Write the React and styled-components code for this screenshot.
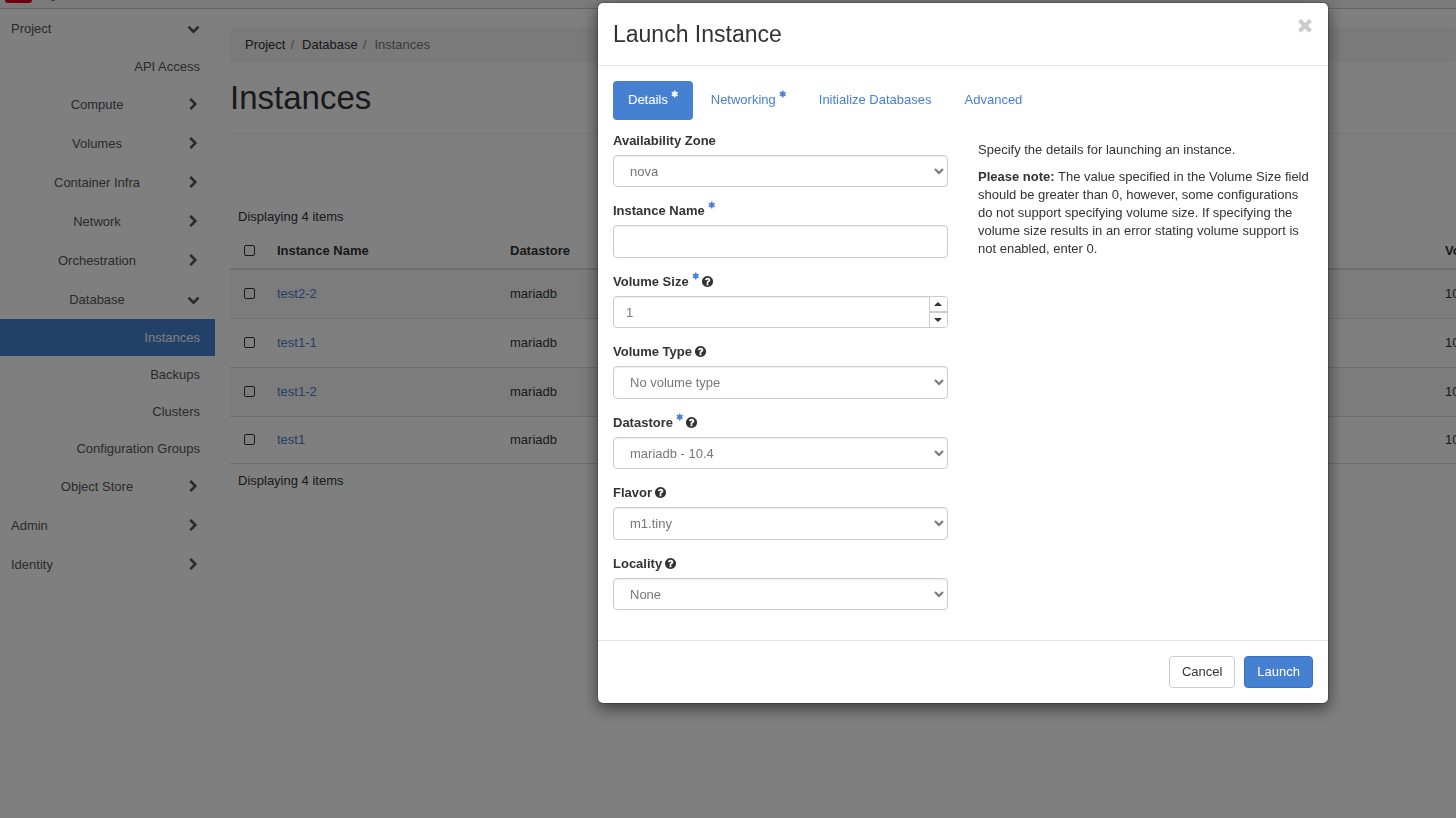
import React from "react";
import styled, { createGlobalStyle, css } from "styled-components";

const blue = "#4680d0";

const GlobalStyle = createGlobalStyle`
  *, *::before, *::after { box-sizing: border-box; }
  html, body { height: 100%; }
  body {
    margin: 0;
    background: #fff;
    color: #333;
    font-family: "Liberation Sans", Arial, sans-serif;
    font-size: 13px;
    line-height: 18px;
    overflow: hidden;
  }
  button, input, select { font: inherit; }
  a { color: ${blue}; text-decoration: none; }
`;

const paths = {
  right:
    "M1363 877l-742 742q-19 19-45 19t-45-19l-166-166q-19-19-19-45t19-45l531-531-531-531q-19-19-19-45t19-45l166-166q19-19 45-19t45 19l742 742q19 19 19 45t-19 45z",
  down:
    "M1683 808l-742 741q-19 19-45 19t-45-19l-742-741q-19-19-19-45.5t19-45.5l166-165q19-19 45-19t45 19l531 531 531-531q19-19 45-19t45 19l166 165q19 19 19 45.5t-19 45.5z",
  times:
    "M1490 1322q0 40-28 68l-136 136q-28 28-68 28t-68-28l-294-294-294 294q-28 28-68 28t-68-28l-136-136q-28-28-28-68t28-68l294-294-294-294q-28-28-28-68t28-68l136-136q28-28 68-28t68 28l294 294 294-294q28-28 68-28t68 28l136 136q28 28 28 68t-28 68l-294 294 294 294q28 28 28 68z",
  asterisk:
    "M1482 1050q46 26 59.5 77.5t-12.5 97.5l-64 110q-26 46-77.5 59.5t-97.5-12.5l-266-153v307q0 52-38 90t-90 38h-128q-52 0-90-38t-38-90v-307l-266 153q-46 26-97.5 12.5t-77.5-59.5l-64-110q-26-46-12.5-97.5t59.5-77.5l266-154-266-154q-46-26-59.5-77.5t12.5-97.5l64-110q26-46 77.5-59.5t97.5 12.5l266 153v-307q0-52 38-90t90-38h128q52 0 90 38t38 90v307l266-153q46-26 97.5-12.5t77.5 59.5l64 110q26 46 12.5 97.5t-59.5 77.5l-266 154z",
  question:
    "M1024 1376v-192q0-14-9-23t-23-9h-192q-14 0-23 9t-9 23v192q0 14 9 23t23 9h192q14 0 23-9t9-23zm256-672q0-88-55.5-163t-138.5-116-170-41q-243 0-371 213-15 24 8 42l132 100q7 6 19 6 16 0 25-12 53-68 86-92 34-24 86-24 48 0 85.5 26t37.5 59q0 38-20 61t-68 45q-63 28-115.5 86.5t-52.5 125.5v36q0 14 9 23t23 9h192q14 0 23-9t9-23q0-19 21.5-49.5t54.5-49.5q32-18 49-28.5t46-35 44.5-48 28-60.5 12.5-81zm384 192q0 209-103 385.5t-279.5 279.5-385.5 103-385.5-103-279.5-279.5-103-385.5 103-385.5 279.5-279.5 385.5-103 385.5 103 279.5 279.5 103 385.5z",
};

const Icon = ({ name, size = 13, className }) => (
  <svg
    className={className}
    width={size}
    height={size}
    viewBox="0 0 1792 1792"
    fill="currentColor"
    aria-hidden="true"
  >
    <path d={paths[name]} />
  </svg>
);

/* Page */

const TopBar = styled.header`
  display: flex;
  align-items: flex-end;
  height: 9px;
  padding: 0 5px 5px;
  overflow: hidden;
  background: #f5f5f5;
  border-bottom: 1px solid #ccc;
`;

const Logo = styled.svg`
  display: block;
  flex: none;
`;

const Columns = styled.div`
  display: flex;
  align-items: flex-start;
`;

const Sidebar = styled.nav`
  flex: none;
  width: 215px;
`;

const NavToggle = styled.button`
  display: flex;
  align-items: center;
  width: 100%;
  height: 39px;
  padding: 0 11px;
  border: 0;
  background: none;
  color: #555;
  cursor: pointer;
`;

const NavLabel = styled.span`
  flex: 1;
  text-align: ${(p) => (p.$nested ? "center" : "left")};
`;

const NavArrow = styled.span`
  display: flex;
  justify-content: center;
  width: 21px;
`;

const NavLink = styled.a`
  display: block;
  padding: 10px 15px 9px;
  text-align: right;
  color: ${(p) => (p.$active ? "#fff" : "#555")};
  background: ${(p) => (p.$active ? blue : "none")};
`;

const Main = styled.main`
  flex: 1;
  min-width: 0;
  padding: 18px 0 0 15px;
  overflow: hidden;
`;

const Breadcrumb = styled.ol`
  display: flex;
  margin: 0;
  padding: 9px 15px 8px;
  list-style: none;
  background: #f5f5f5;
  border-radius: 4px;
`;

const Crumb = styled.li`
  color: #777;

  & > a { color: #333; }

  & + &::before {
    content: "/";
    padding: 0 8px 0 5px;
    color: #888;
  }
`;

const PageTitle = styled.h1`
  margin: 18px 0 74px;
  padding-bottom: 17px;
  border-bottom: 1px solid #eee;
  font-size: 33px;
  font-weight: 400;
  line-height: 36px;
`;

const Count = styled.div`
  padding: 0 8px;
`;

const Table = styled.table`
  width: 100%;
  margin: 8px 0;
  table-layout: fixed;
  border-spacing: 0;
  white-space: nowrap;
`;

const HeadCell = styled.th`
  width: ${(p) => p.$width || "auto"};
  height: 36px;
  padding: 0 8px;
  text-align: left;
  border-bottom: 2px solid #ddd;
`;

const Row = styled.tr`
  height: 49px;

  &:nth-child(odd) { background: #f9f9f9; }
  &:last-child { height: 47px; }
`;

const Cell = styled.td`
  padding: 0 8px;
  border-bottom: 1px solid #ddd;
`;

const Check = styled.input.attrs({ type: "checkbox" })`
  display: block;
  appearance: none;
  width: 11px;
  height: 11px;
  margin: 0 6px 2px;
  border: 1px solid #333;
  border-radius: 2px;
`;

/* Dialog */

const Backdrop = styled.div`
  position: fixed;
  inset: 0;
  display: flex;
  justify-content: flex-end;
  align-items: flex-start;
  padding: 2px 127px;
  background: rgba(0, 0, 0, 0.5);
`;

const Dialog = styled.section`
  width: 732px;
  max-width: 100%;
  background: #fff;
  background-clip: padding-box;
  border: 1px solid rgba(0, 0, 0, 0.2);
  border-radius: 6px;
  box-shadow: 0 5px 15px rgba(0, 0, 0, 0.5);
`;

const DialogHeader = styled.header`
  display: flex;
  justify-content: space-between;
  align-items: flex-start;
  padding: 12px 15px 14px;
  border-bottom: 1px solid #e5e5e5;
`;

const DialogTitle = styled.h2`
  margin: 3px 0 0;
  font-size: 23px;
  font-weight: 400;
  line-height: 33px;
`;

const CloseButton = styled.button`
  display: flex;
  margin: 0 -2px;
  padding: 0;
  border: 0;
  background: none;
  color: #ccc;
  cursor: pointer;
`;

const DialogBody = styled.div`
  padding: 15px;
`;

const Tabs = styled.div`
  display: flex;
  gap: 3px;
  margin-bottom: 12px;
`;

const Tab = styled.button`
  display: flex;
  align-items: flex-start;
  height: 39px;
  padding: 10px 15px;
  border: 0;
  border-radius: 4px;
  line-height: 18px;
  background: ${(p) => (p.$active ? blue : "none")};
  color: ${(p) => (p.$active ? "#fff" : blue)};
  cursor: pointer;
`;

const Star = styled(Icon)`
  flex: none;
  align-self: flex-start;
  margin: -1px -1px 0 3px;
`;

const LabelStar = styled(Star)`
  color: ${blue};
`;

const Help = styled(Icon)`
  flex: none;
  margin: 0 0 1px 2px;
`;

const FormGrid = styled.div`
  display: grid;
  grid-template-columns: 1fr 1fr;
  gap: 30px;
`;

const control = css`
  width: 100%;
  height: 32px;
  border: 1px solid #ccc;
  border-radius: 4px;
  background: #fff;
  color: #777;
  box-shadow: inset 0 1px 1px rgba(0, 0, 0, 0.075);
`;

const Select = styled.select`
  ${control}
  padding: 0 0 0 12px;
`;

const TextInput = styled.input`
  ${control}
  padding: 0 12px;
`;

const NumberBox = styled.div`
  ${control}
  display: flex;
  overflow: hidden;
`;

const NumberInput = styled.input.attrs({ type: "number" })`
  flex: 1;
  min-width: 0;
  padding: 2px 12px 0;
  border: 0;
  background: none;
  color: inherit;
  appearance: textfield;

  &::-webkit-inner-spin-button { appearance: none; }
`;

const Stepper = styled.div`
  display: flex;
  flex-direction: column;
  width: 18px;
  border-left: 1px solid #ccc;
`;

const StepButton = styled.button`
  display: flex;
  flex: 1;
  align-items: center;
  justify-content: center;
  padding: 0 1px 0 0;
  border: 0 solid #ccc;
  border-width: ${(p) => (p.$up ? "0 0 1px" : "1px 0 0")};
  background: #fff;
  color: #333;
  cursor: pointer;
`;

const Field = styled.div`
  margin-bottom: 15px;

  &:nth-child(even) > ${Select},
  &:nth-child(even) > ${TextInput} {
    height: 33px;
  }
`;

const Label = styled.label`
  display: flex;
  align-items: center;
  height: 18px;
  margin-bottom: 5px;
  font-weight: 700;
`;

const HelpText = styled.div`
  padding-top: 9px;

  p { margin: 0 0 9px; }
`;

const DialogFooter = styled.footer`
  display: flex;
  justify-content: flex-end;
  gap: 9px;
  padding: 15px;
  border-top: 1px solid #e5e5e5;
`;

const Button = styled.button`
  height: 32px;
  padding: 0 12px;
  border: 1px solid ${(p) => (p.$primary ? "#3573c9" : "#ccc")};
  border-radius: 4px;
  background: ${(p) => (p.$primary ? blue : "#fff")};
  color: ${(p) => (p.$primary ? "#fff" : "#333")};
  cursor: pointer;
`;

const nav = [
  { label: "Project", open: true },
  { label: "API Access", leaf: true },
  { label: "Compute", nested: true },
  { label: "Volumes", nested: true },
  { label: "Container Infra", nested: true },
  { label: "Network", nested: true },
  { label: "Orchestration", nested: true },
  { label: "Database", nested: true, open: true },
  { label: "Instances", leaf: true, active: true },
  { label: "Backups", leaf: true },
  { label: "Clusters", leaf: true },
  { label: "Configuration Groups", leaf: true },
  { label: "Object Store", nested: true },
  { label: "Admin" },
  { label: "Identity" },
];

const instances = ["test2-2", "test1-1", "test1-2", "test1"];

const tabs = [
  { label: "Details", required: true, active: true },
  { label: "Networking", required: true },
  { label: "Initialize Databases" },
  { label: "Advanced" },
];

const fields = [
  { id: "zone", label: "Availability Zone", value: "nova" },
  { id: "name", label: "Instance Name", required: true, type: "text" },
  { id: "size", label: "Volume Size", required: true, help: true, type: "number", value: 1 },
  { id: "voltype", label: "Volume Type", help: true, value: "No volume type" },
  { id: "datastore", label: "Datastore", required: true, help: true, value: "mariadb - 10.4" },
  { id: "flavor", label: "Flavor", help: true, value: "m1.tiny" },
  { id: "locality", label: "Locality", help: true, value: "None" },
];

const Caret = ({ up }) => (
  <svg width="8" height="4" viewBox="0 0 8 4" fill="currentColor" aria-hidden="true">
    <path d={up ? "M4 0L7.6 3.4Q7.8 4 7.2 4H.8Q.2 4 .4 3.4z" : "M4 4L7.6.6Q7.8 0 7.2 0H.8Q.2 0 .4.6z"} />
  </svg>
);

function FieldControl({ field }) {
  if (field.type === "text") return <TextInput id={field.id} type="text" />;
  if (field.type === "number") {
    return (
      <NumberBox>
        <NumberInput id={field.id} defaultValue={field.value} />
        <Stepper>
          <StepButton type="button" $up aria-label="Increase"><Caret up /></StepButton>
          <StepButton type="button" aria-label="Decrease"><Caret /></StepButton>
        </Stepper>
      </NumberBox>
    );
  }
  return (
    <Select id={field.id}>
      <option>{field.value}</option>
    </Select>
  );
}

export default function App() {
  return (
    <>
      <GlobalStyle />
      <TopBar>
        <Logo width="60" height="40" viewBox="0 0 60 40" aria-hidden="true">
          <rect y="-4" width="27" height="44" rx="3" fill="#e2001a" />
          <path d="M46 36h4v1.4q-2 1.2-4 0z" fill="#777" />
        </Logo>
      </TopBar>
      <Columns>
        <Sidebar>
          {nav.map((item) =>
            item.leaf ? (
              <NavLink key={item.label} href="#" $active={item.active}>
                {item.label}
              </NavLink>
            ) : (
              <NavToggle key={item.label} type="button">
                <NavLabel $nested={item.nested}>{item.label}</NavLabel>
                <NavArrow><Icon name={item.open ? "down" : "right"} /></NavArrow>
              </NavToggle>
            )
          )}
        </Sidebar>
        <Main>
          <Breadcrumb>
            <Crumb><a href="#">Project</a></Crumb>
            <Crumb><a href="#">Database</a></Crumb>
            <Crumb>Instances</Crumb>
          </Breadcrumb>
          <PageTitle>Instances</PageTitle>
          <Count>Displaying 4 items</Count>
          <Table>
            <thead>
              <tr>
                <HeadCell $width="39px"><Check aria-label="Select all" /></HeadCell>
                <HeadCell $width="233px">Instance Name</HeadCell>
                <HeadCell>Datastore</HeadCell>
                <HeadCell $width="19px">Volume Size</HeadCell>
              </tr>
            </thead>
            <tbody>
              {instances.map((name) => (
                <Row key={name}>
                  <Cell><Check aria-label={name} /></Cell>
                  <Cell><a href="#">{name}</a></Cell>
                  <Cell>mariadb</Cell>
                  <Cell>10</Cell>
                </Row>
              ))}
            </tbody>
          </Table>
          <Count>Displaying 4 items</Count>
        </Main>
      </Columns>
      <Backdrop>
        <Dialog role="dialog" aria-labelledby="dialog-title">
          <DialogHeader>
            <DialogTitle id="dialog-title">Launch Instance</DialogTitle>
            <CloseButton type="button" aria-label="Close"><Icon name="times" size={20} /></CloseButton>
          </DialogHeader>
          <DialogBody>
            <Tabs role="tablist">
              {tabs.map((tab) => (
                <Tab key={tab.label} type="button" role="tab" $active={tab.active}>
                  {tab.label}
                  {tab.required && <Star name="asterisk" size={8} />}
                </Tab>
              ))}
            </Tabs>
            <FormGrid>
              <form>
                {fields.map((field) => (
                  <Field key={field.id}>
                    <Label htmlFor={field.id}>
                      {field.label}
                      {field.required && <LabelStar name="asterisk" size={8} />}
                      {field.help && <Help name="question" />}
                    </Label>
                    <FieldControl field={field} />
                  </Field>
                ))}
              </form>
              <HelpText>
                <p>Specify the details for launching an instance.</p>
                <p>
                  <strong>Please note:</strong> The value specified in the Volume Size field should be
                  greater than 0, however, some configurations do not support specifying volume size. If
                  specifying the volume size results in an error stating volume support is not enabled,
                  enter 0.
                </p>
              </HelpText>
            </FormGrid>
          </DialogBody>
          <DialogFooter>
            <Button type="button">Cancel</Button>
            <Button type="button" $primary>Launch</Button>
          </DialogFooter>
        </Dialog>
      </Backdrop>
    </>
  );
}
